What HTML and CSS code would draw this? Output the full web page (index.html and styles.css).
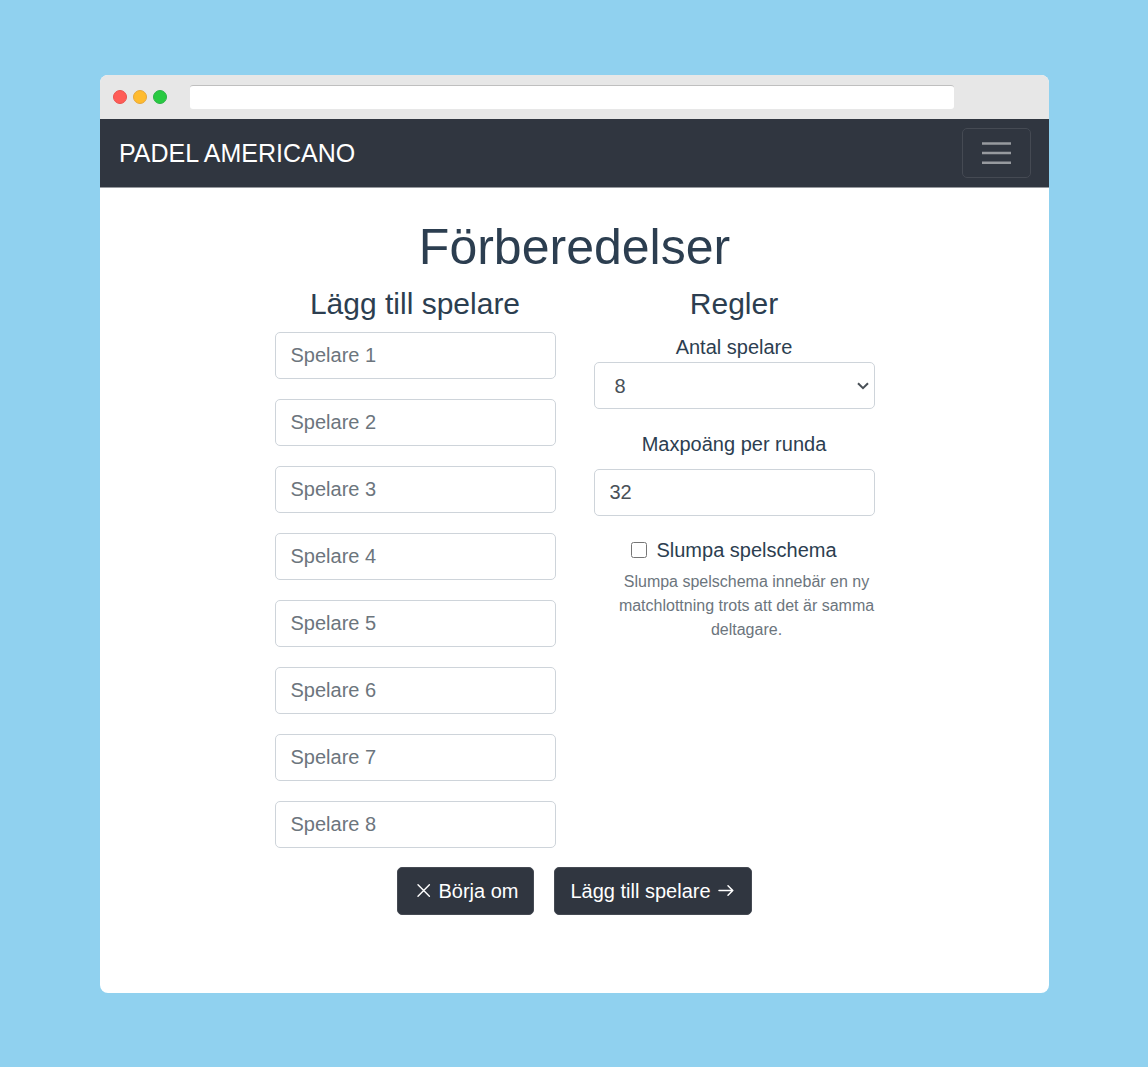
FILE: index.html
```html
<!DOCTYPE html>
<html lang="sv">
<head>
  <meta charset="utf-8">
  <meta name="viewport" content="width=device-width, initial-scale=1">
  <title>Padel Americano</title>
  <link rel="stylesheet" href="styles.css">
</head>
<body>
  <div class="window">
    <div class="titlebar">
      <div class="dots">
        <span class="dot dot-red"></span>
        <span class="dot dot-yellow"></span>
        <span class="dot dot-green"></span>
      </div>
      <input class="address" type="text" aria-label="Adress">
    </div>
    <header class="navbar">
      <a class="brand" href="#">PADEL AMERICANO</a>
      <button class="toggler" type="button" aria-label="Meny">
        <svg width="30" height="24" viewBox="0 0 30 24" fill="none" stroke="currentColor" stroke-width="2.4" aria-hidden="true">
          <path d="M0 2.5h29M0 12h29M0 21.7h29"/>
        </svg>
      </button>
    </header>
    <main class="content">
      <h1 class="title">Förberedelser</h1>
      <form class="setup">
        <div class="columns">
          <section class="column">
            <h2 class="subtitle">Lägg till spelare</h2>
            <div class="players">
              <input class="field" type="text" placeholder="Spelare 1" aria-label="Spelare 1">
              <input class="field" type="text" placeholder="Spelare 2" aria-label="Spelare 2">
              <input class="field" type="text" placeholder="Spelare 3" aria-label="Spelare 3">
              <input class="field" type="text" placeholder="Spelare 4" aria-label="Spelare 4">
              <input class="field" type="text" placeholder="Spelare 5" aria-label="Spelare 5">
              <input class="field" type="text" placeholder="Spelare 6" aria-label="Spelare 6">
              <input class="field" type="text" placeholder="Spelare 7" aria-label="Spelare 7">
              <input class="field" type="text" placeholder="Spelare 8" aria-label="Spelare 8">
            </div>
          </section>
          <section class="column">
            <h2 class="subtitle">Regler</h2>
            <div class="rules">
              <div class="group">
                <label for="count">Antal spelare</label>
                <div class="select-wrap">
                  <select class="field select" id="count">
                    <option>4</option>
                    <option selected>8</option>
                    <option>12</option>
                  </select>
                  <svg class="chevron" width="12" height="8" viewBox="0 0 12 8" fill="none" stroke="currentColor" stroke-width="2" aria-hidden="true">
                    <path d="M1 1.2l5 5 5-5"/>
                  </svg>
                </div>
              </div>
              <div class="group group-spaced">
                <label for="points">Maxpoäng per runda</label>
                <input class="field" id="points" type="text" inputmode="numeric" value="32">
              </div>
              <div class="group">
                <div class="check">
                  <input class="checkbox" id="shuffle" type="checkbox" aria-describedby="shuffle-help">
                  <label for="shuffle">Slumpa spelschema</label>
                </div>
                <p class="help" id="shuffle-help">Slumpa spelschema innebär en ny matchlottning trots att det är samma deltagare.</p>
              </div>
            </div>
          </section>
        </div>
        <div class="actions">
          <button class="button" type="reset">
            <svg width="20" height="20" viewBox="0 0 20 20" fill="none" stroke="currentColor" stroke-width="1.4" stroke-linecap="round" aria-hidden="true">
              <path d="M5 3.8l11.4 11.4M16.4 3.8L5 15.2"/>
            </svg>
            Börja om
          </button>
          <button class="button" type="submit">
            Lägg till spelare
            <svg width="20" height="20" viewBox="0 0 20 20" fill="none" stroke="currentColor" stroke-width="1.5" stroke-linecap="round" stroke-linejoin="round" aria-hidden="true">
              <path d="M3 9.5h13.8M12 4.7l4.8 4.8-4.8 4.8"/>
            </svg>
          </button>
        </div>
      </form>
    </main>
  </div>
</body>
</html>
```
FILE: styles.css
```css
*,
*::before,
*::after {
  box-sizing: border-box;
}

body {
  display: flex;
  min-height: 100vh;
  margin: 0;
  padding: 75px 99px 74px 100px;
  background: #90d1ef;
  color: #2c3e50;
  font: 20px/30px "Liberation Sans", Arial, sans-serif;
}

.window {
  display: flex;
  flex: 1;
  flex-direction: column;
  min-width: 0;
  overflow: hidden;
  border-radius: 8px;
  background: #fff;
}

/* Browser chrome */
.titlebar {
  display: flex;
  align-items: center;
  gap: 23px;
  height: 44px;
  padding: 0 95px 0 13px;
  background: #e7e7e7;
}

.dots {
  display: flex;
  gap: 6px;
}

.dot {
  width: 14px;
  height: 14px;
  border: 1px solid;
  border-radius: 50%;
}

.dot-red {
  border-color: #e9524e;
  background: #ff5c57;
}

.dot-yellow {
  border-color: #e5a73a;
  background: #ffbb2e;
}

.dot-green {
  border-color: #2bb247;
  background: #28ca41;
}

.address {
  flex: 1;
  min-width: 0;
  height: 24px;
  padding: 0 8px;
  border: 0;
  border-top: 1px solid #bfbfbf;
  border-radius: 3px;
  background: #fff;
}

/* Navigation */
.navbar {
  display: flex;
  align-items: center;
  justify-content: space-between;
  padding: 9px 18px 9px 19px;
  border-bottom: 1px solid #979a9f;
  background: #303640;
}

.brand {
  color: #fff;
  font-size: 25px;
  text-decoration: none;
}

.toggler {
  display: flex;
  align-items: center;
  justify-content: center;
  width: 69px;
  height: 50px;
  padding: 0;
  border: 1px solid #454a53;
  border-radius: 5px;
  background: transparent;
  color: #979a9f;
}

/* Form */
.content {
  padding: 29px 20px 78px;
}

.title,
.subtitle {
  margin: 0 0 10px;
  font-weight: 400;
  text-align: center;
}

.title {
  margin-bottom: 9px;
  font-size: 50px;
  line-height: 60px;
}

.subtitle {
  font-size: 30px;
  line-height: 36px;
}

.setup {
  max-width: 600px;
  margin: 0 auto;
}

.columns {
  display: grid;
  grid-template-columns: repeat(2, minmax(0, 1fr));
  gap: 38px;
}

.players,
.rules {
  display: flex;
  flex-direction: column;
  gap: 20px;
}

.group {
  display: flex;
  flex-direction: column;
  text-align: center;
}

.group-spaced {
  gap: 10px;
}

.field {
  width: 100%;
  height: 47px;
  padding: 0 15px;
  border: 1px solid #ced4da;
  border-radius: 5px;
  background: #fff;
  color: #495057;
  font: inherit;
}

.field::placeholder {
  color: #6c757d;
  opacity: 1;
}

.select-wrap {
  position: relative;
  display: flex;
}

.select {
  padding: 0 20px;
  appearance: none;
}

.chevron {
  position: absolute;
  top: 20px;
  right: 6px;
  color: #495057;
  pointer-events: none;
}

.check {
  display: flex;
  align-items: center;
  justify-content: center;
  gap: 9px;
  line-height: 28px;
}

.checkbox {
  width: 16px;
  height: 16px;
  margin: 0;
}

.help {
  margin: 6px 0 0;
  padding-left: 25px;
  color: #6c757d;
  font-size: 16px;
  line-height: 24px;
}

.actions {
  display: flex;
  flex-wrap: wrap;
  justify-content: center;
  gap: 20px;
  margin-top: 19px;
}

.button {
  display: flex;
  align-items: center;
  gap: 5px;
  height: 48px;
  padding: 0 15px;
  border: 1px solid #454a53;
  border-radius: 5px;
  background: #303640;
  color: #fff;
  font: inherit;
}
```
